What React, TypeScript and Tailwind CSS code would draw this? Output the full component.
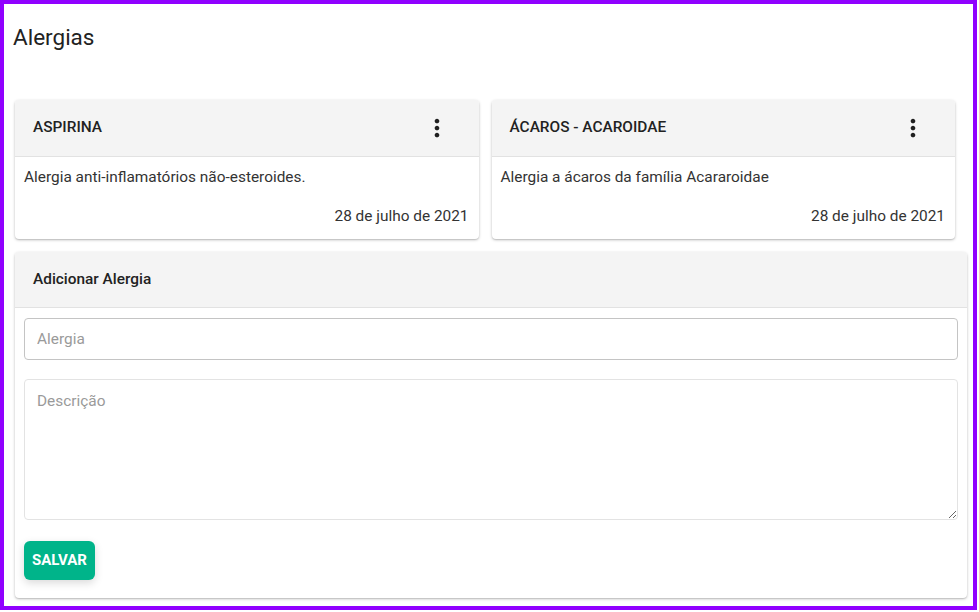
import React from "react";

function MoreVert() {
  return (
    <svg width="28" height="28" viewBox="0 0 24 24" fill="#1f1f1f">
      <path d="M12 8c1.1 0 2-.9 2-2s-.9-2-2-2-2 .9-2 2 .9 2 2 2zm0 2c-1.1 0-2 .9-2 2s.9 2 2 2 2-.9 2-2-.9-2-2-2zm0 6c-1.1 0-2 .9-2 2s.9 2 2 2 2-.9 2-2-.9-2-2-2z" />
    </svg>
  );
}

function AllergyCard({ title, desc, date }: { title: string; desc: string; date: string }) {
  return (
    <div className="bg-white rounded-[4px] shadow-[0_1px_3px_rgba(0,0,0,0.25),0_1px_1px_rgba(0,0,0,0.08)] overflow-hidden h-[139px] flex flex-col">
      <div className="h-[57px] bg-[#f4f4f4] border-b border-[#e2e2e2] flex items-center justify-between pl-[18px] pr-[28px] shrink-0">
        <span className="text-[15.4px] font-medium text-[#222]">{title}</span>
        <MoreVert />
      </div>
      <div className="flex-1 flex flex-col pl-[9px] pr-[10px] pt-[9px]">
        <p className="text-[15.4px] leading-[22px] text-[#333]">{desc}</p>
        <p className="text-[15.4px] leading-[22px] text-[#333] text-right mt-[17px]">{date}</p>
      </div>
    </div>
  );
}

export default function App() {
  return (
    <div
      className="w-[977px] h-[610px] border-4 border-[#9000ff] bg-white pl-[9px] pt-[20px]"
      style={{ fontFamily: "Roboto, 'Noto Sans', sans-serif" }}
    >
      <h1 className="text-[22.5px] leading-[26px] text-[#222] font-normal">Alergias</h1>
      <div className="pl-[2px] mt-[50px]">
        <div className="w-[940px] grid grid-cols-2 gap-[13px]">
          <AllergyCard title="ASPIRINA" desc="Alergia anti-inflamatórios não-esteroides." date="28 de julho de 2021" />
          <AllergyCard title="ÁCAROS - ACAROIDAE" desc="Alergia a ácaros da família Acararoidae" date="28 de julho de 2021" />
        </div>
        <div className="mt-[13px] w-[952px] h-[346px] bg-white rounded-[4px] shadow-[0_1px_3px_rgba(0,0,0,0.25),0_1px_1px_rgba(0,0,0,0.08)] overflow-hidden flex flex-col">
          <div className="h-[56px] bg-[#f4f4f4] border-b border-[#e2e2e2] flex items-center pl-[18px] shrink-0">
            <span className="text-[15.4px] font-medium text-[#222]">Adicionar Alergia</span>
          </div>
          <div className="px-[9px] pt-[10px] flex flex-col">
            <input
              placeholder="Alergia"
              className="h-[42px] w-full border border-[#c4c4c4] rounded-[4px] px-[12px] text-[15.4px] text-[#333] placeholder:text-[#9a9a9a] outline-none"
            />
            <textarea
              placeholder="Descrição"
              className="mt-[19px] h-[141px] w-full border border-[#e3e3e3] rounded-[4px] px-[12px] pt-[10px] text-[15.4px] text-[#333] placeholder:text-[#9a9a9a] outline-none"
            />
            <div className="mt-[21px]">
              <button className="h-[39px] w-[71px] bg-[#00b48a] text-white text-[15px] font-bold rounded-[6px] shadow-[0_3px_8px_rgba(0,0,0,0.15)]">
                SALVAR
              </button>
            </div>
          </div>
        </div>
      </div>
    </div>
  );
}
